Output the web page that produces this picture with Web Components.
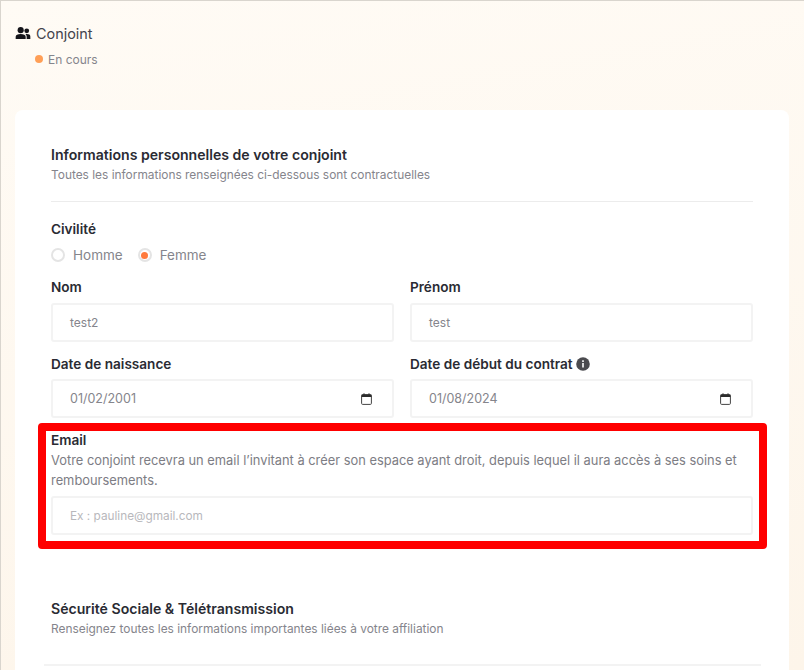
<!DOCTYPE html>
<html lang="fr">
<head>
<meta charset="utf-8">
<title>Conjoint</title>
<style>
  html, body { margin: 0; height: 100%; overflow: hidden; }
  body {
    font-family: 'Inter', 'Liberation Sans', sans-serif;
    color: #2a2b33;
    background: linear-gradient(170deg, #fffbf5 0%, #fdf5ea 100%);
    border-top: 1px solid #d9d5ce;
    border-left: 1px solid #d9d5ce;
    box-sizing: border-box;
  }
</style>
</head>
<body>
<template id="person-header-tpl">
  <style>
    :host { display: block; padding: 22px 0 0 14px; height: 109px; box-sizing: border-box; }
    .title { display: flex; align-items: center; gap: 5px; height: 20px; font-size: 14.4px; color: #43444c; }
    svg { width: 16px; height: 16px; fill: #14141a; display: block; }
    .status { display: flex; align-items: center; gap: 5px; margin: 7px 0 0 20px; height: 18px; font-size: 12px; color: #85858c; }
    .dot { width: 8px; height: 8px; border-radius: 50%; background: #ff9f57; }
  </style>
  <div class="title">
    <svg viewBox="0 0 24 24"><circle cx="8.500" cy="7.700" r="4.600"/><circle cx="17.600" cy="8.700" r="3.600"/><path d="M1 21v-3.500C1 14.800 4 13.500 8.500 13.500s7.500 1.300 7.500 4V21zM17.500 21v-3.500c0-1.600-.7-2.800-1.800-3.700.6-.1 1.200-.2 2-.2 3.200 0 5.300 1.200 5.300 3.500V21z"/></svg>
    <slot></slot>
  </div>
  <div class="status"><span class="dot"></span><slot name="status"></slot></div>
</template>

<template id="form-card-tpl">
  <style>
    :host { display: block; background: #fff; border-radius: 8px 8px 0 0; margin: 0 15px 0 14px; padding: 36px 36px 0; height: 570px; box-sizing: border-box; }
  </style>
  <slot></slot>
</template>

<template id="section-head-tpl">
  <style>
    :host { display: block; }
    .title { font-size: 14.100px; font-weight: 600; line-height: 18px; color: #2a2b33; }
    .sub { font-size: 11.900px; line-height: 16px; color: #85858c; margin-top: 3px; }
  </style>
  <div class="title"><slot></slot></div>
  <div class="sub"><slot name="sub"></slot></div>
</template>

<template id="radio-option-tpl">
  <style>
    :host { display: inline-flex; align-items: center; gap: 8px; font-size: 13.500px; color: #85858c; }
    .ring { width: 10px; height: 10px; border-radius: 50%; border: 2px solid #e4e4e4; display: flex; align-items: center; justify-content: center; }
    :host([checked]) .ring::after { content: ""; width: 7px; height: 7px; border-radius: 50%; background: #ff7a3d; }
  </style>
  <span class="ring"></span><slot></slot>
</template>

<template id="form-field-tpl">
  <style>
    :host { display: block; min-width: 0; }
    .label { display: flex; align-items: center; gap: 3px; font-size: 13.600px; font-weight: 600; line-height: 18px; color: #2a2b33; }
    .box { display: flex; align-items: center; justify-content: space-between; height: 39px; box-sizing: border-box; margin-top: 7px; padding: 0 20px 0 17px; border: 2px solid #f3f3f3; border-radius: 3px; background: #fff; font-size: 12.500px; color: #85858c; }
    :host([small]) .box { font-size: 12px; }
    :host([date]) .label { margin-top: 1px; }
    :host([date]) .box { margin-top: 6px; }
    .cal { display: none; width: 11px; height: 12px; }
    :host([date]) .cal { display: block; }
  </style>
  <div class="label"><slot name="label"></slot></div>
  <div class="box">
    <span><slot></slot></span>
    <svg class="cal" viewBox="0 0 11 12"><rect x=".6" y="1.600" width="9.800" height="9.800" rx="1" fill="none" stroke="#444" stroke-width="1"/><path d="M.6 1.600h9.800v2.400H.6z" fill="#2b2b2b"/><path d="M3 .3v1.500M8 .3v1.500" stroke="#2b2b2b"/></svg>
  </div>
</template>

<template id="email-field-tpl">
  <style>
    :host { display: block; position: relative; margin-top: 14px; }
    .label { font-size: 13.600px; font-weight: 600; line-height: 16px; color: #2a2b33; }
    .help { font-size: 12.860px; line-height: 20px; color: #7d7d84; margin-top: 3px; }
    .box { display: flex; align-items: center; height: 39px; box-sizing: border-box; margin-top: 5px; padding: 0 17px; border: 2px solid #f3f3f3; border-radius: 3px; font-size: 11.800px; color: #b8b8bc; }
    .highlight { position: absolute; left: -13px; right: -14px; top: -9px; bottom: -14px; border: 8px solid #ff0000; border-radius: 4px; pointer-events: none; }
  </style>
  <div class="label"><slot name="label"></slot></div>
  <div class="help"><slot name="help"></slot></div>
  <div class="box"><slot></slot></div>
  <div class="highlight"></div>
</template>

<person-header>
  Conjoint
  <span slot="status">En cours</span>
</person-header>

<form-card>
  <section-head>
    Informations personnelles de votre conjoint
    <span slot="sub">Toutes les informations renseignées ci-dessous sont contractuelles</span>
  </section-head>
  <hr-line></hr-line>
  <civility-group></civility-group>
  <field-grid>
    <form-field small><span slot="label">Nom</span>test2</form-field>
    <form-field small><span slot="label">Prénom</span>test</form-field>
    <form-field date><span slot="label">Date de naissance</span>01/02/2001</form-field>
    <form-field date>
      <span slot="label">Date de début du contrat</span>
      <info-icon slot="label"></info-icon>
      01/08/2024
    </form-field>
  </field-grid>
  <email-field>
    <span slot="label">Email</span>
    <span slot="help">Votre conjoint recevra un email l’invitant à créer son espace ayant droit, depuis lequel il aura accès à ses soins et remboursements.</span>
    Ex : pauline@gmail.com
  </email-field>
  <second-section>
    <section-head>
      Sécurité Sociale &amp; Télétransmission
      <span slot="sub">Renseignez toutes les informations importantes liées à votre affiliation</span>
    </section-head>
  </second-section>
</form-card>

<script>
  // Elements whose whole markup lives in a <template>
  function fromTemplate(name, tplId) {
    customElements.define(name, class extends HTMLElement {
      constructor() {
        super();
        this.attachShadow({ mode: 'open' });
        this.shadowRoot.appendChild(document.getElementById(tplId).content.cloneNode(true));
      }
    });
  }

  fromTemplate('person-header', 'person-header-tpl');
  fromTemplate('form-card', 'form-card-tpl');
  fromTemplate('section-head', 'section-head-tpl');
  fromTemplate('radio-option', 'radio-option-tpl');
  fromTemplate('form-field', 'form-field-tpl');
  fromTemplate('email-field', 'email-field-tpl');

  class HrLine extends HTMLElement {
    constructor() {
      super();
      this.attachShadow({ mode: 'open' }).innerHTML = `
        <style>:host { display: block; height: 1px; background: #ececec; margin-top: 18px; margin-bottom: -1px; }</style>`;
    }
  }
  customElements.define('hr-line', HrLine);

  class CivilityGroup extends HTMLElement {
    constructor() {
      super();
      this.attachShadow({ mode: 'open' }).innerHTML = `
        <style>
          :host { display: block; margin-top: 19px; }
          .label { font-size: 13.600px; font-weight: 600; line-height: 18px; color: #2a2b33; }
          .options { display: flex; gap: 15px; margin-top: 7px; height: 20px; align-items: center; }
        </style>
        <div class="label">Civilité</div>
        <div class="options">
          <radio-option>Homme</radio-option>
          <radio-option checked>Femme</radio-option>
        </div>`;
    }
  }
  customElements.define('civility-group', CivilityGroup);

  class FieldGrid extends HTMLElement {
    constructor() {
      super();
      this.attachShadow({ mode: 'open' }).innerHTML = `
        <style>
          :host { display: grid; grid-template-columns: 1fr 1fr; column-gap: 16px; row-gap: 12px; margin-top: 13px; }
        </style>
        <slot></slot>`;
    }
  }
  customElements.define('field-grid', FieldGrid);

  class InfoIcon extends HTMLElement {
    constructor() {
      super();
      this.attachShadow({ mode: 'open' }).innerHTML = `
        <style>
          :host { display: inline-block; width: 14px; height: 14px; }
          svg { display: block; width: 14px; height: 14px; }
        </style>
        <svg viewBox="0 0 14 14"><circle cx="7" cy="7" r="6.800" fill="#4b4b4f"/><path d="M6.200 6h1.600v4.500H6.200zM6.200 3.300h1.600v1.600H6.200z" fill="#fff"/></svg>`;
    }
  }
  customElements.define('info-icon', InfoIcon);

  class SecondSection extends HTMLElement {
    constructor() {
      super();
      this.attachShadow({ mode: 'open' }).innerHTML = `
        <style>
          :host { display: block; margin-top: 65px; }
          .rule { height: 2px; background: #f3f3f3; margin: 27px -8px 0 -7px; }
        </style>
        <slot></slot>
        <div class="rule"></div>`;
    }
  }
  customElements.define('second-section', SecondSection);
</script>
</body>
</html>
